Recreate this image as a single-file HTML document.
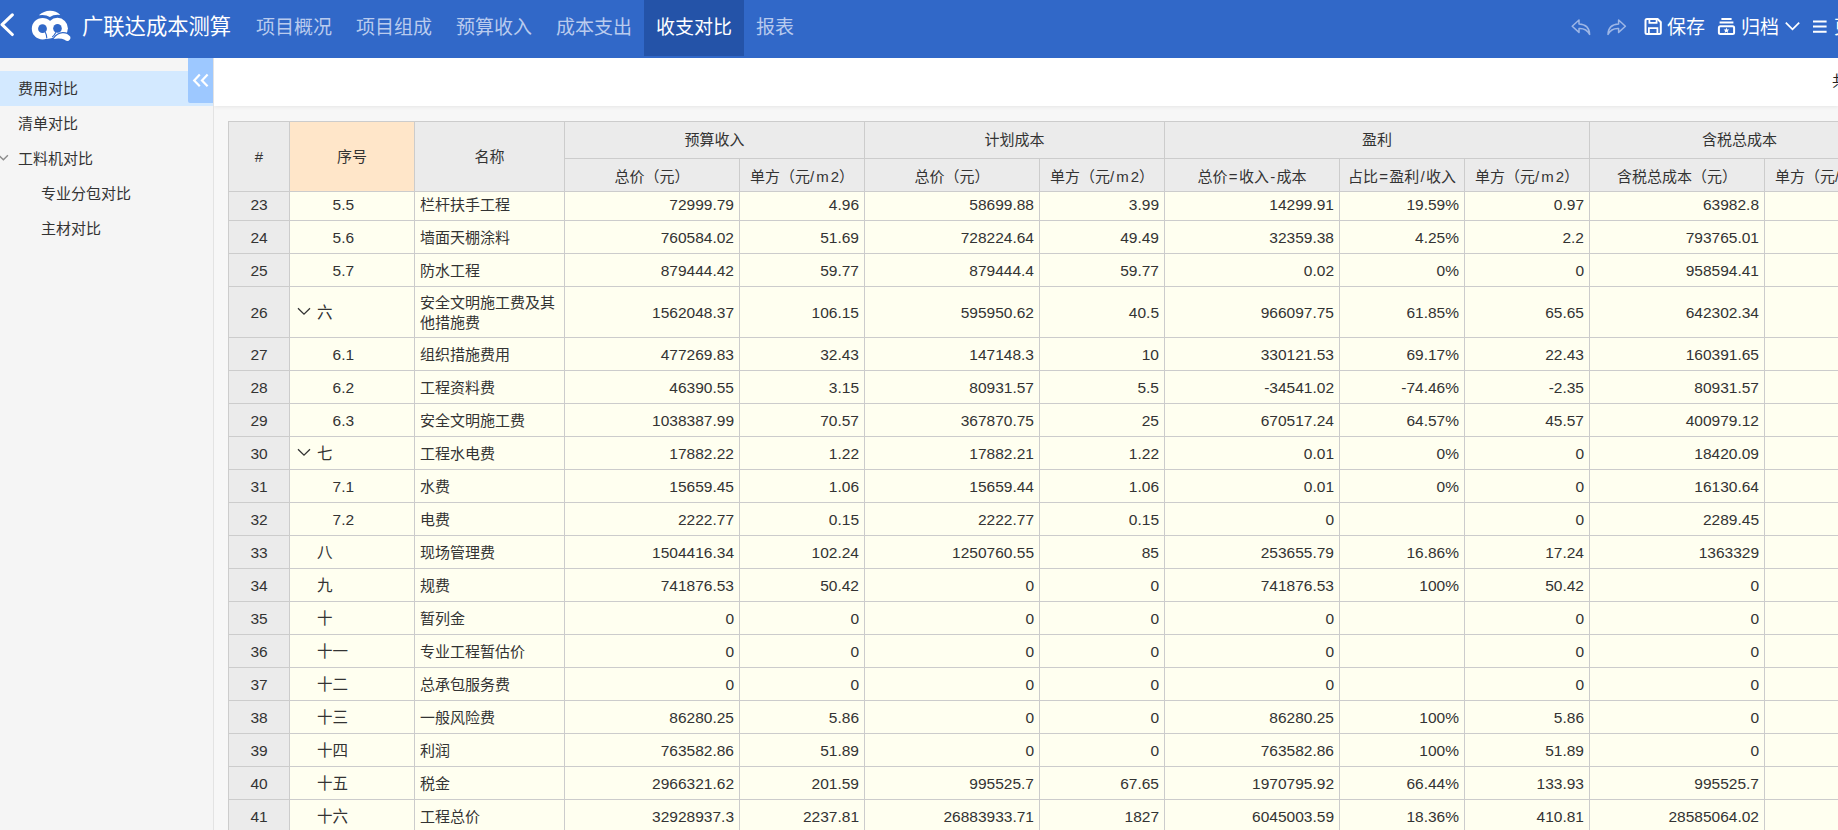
<!DOCTYPE html>
<html lang="zh-CN">
<head>
<meta charset="utf-8">
<title>广联达成本测算</title>
<style>
*{box-sizing:content-box;margin:0;padding:0}
html,body{width:1838px;height:830px;overflow:hidden;background:#f7f7f7}
body{position:relative;font-family:"Liberation Sans","Noto Sans CJK SC",sans-serif;color:#333;font-size:15px}
.abs{position:absolute}
#hd{position:absolute;left:0;top:0;width:1838px;height:58px;background:#3168c8;z-index:5;overflow:hidden}
#hd .title{position:absolute;left:82px;top:0;height:55px;line-height:55px;font-size:21.3px;color:#fff;white-space:nowrap}
#hd .tab{position:absolute;top:0;height:56px;line-height:55px;font-size:19px;color:#b9cbee;text-align:center;white-space:nowrap}
#hd .tab.on{background:#2453a8;color:#fff}
#hd .rt{position:absolute;top:0;height:56px;line-height:56px;font-size:19px;color:#fff;white-space:nowrap}
#sb{position:absolute;left:0;top:58px;width:213px;height:772px;background:#f5f5f5;border-right:1px solid #e3e3e3;z-index:3}
#sb .it{position:absolute;left:0;width:213px;height:35px;line-height:35px;font-size:15px;color:#333;white-space:nowrap}
#sb .it.on{background:#d3e9ff}
#sb .it span{position:absolute;left:18px}
#sb .it.l2 span{left:41px}
#tg{position:absolute;left:188px;top:58px;width:25px;height:45px;background:#9dc8ff;border-radius:0 0 0 2px;z-index:4}
#tb{position:absolute;left:214px;top:58px;width:1624px;height:48px;background:#fff;box-shadow:0 1px 4px rgba(0,0,0,.075);z-index:2;overflow:hidden}
#tb span{position:absolute;left:1618px;top:13px;line-height:20px;font-size:15px;color:#222;white-space:nowrap}
#grid{position:absolute;left:0;top:0;width:1838px;height:830px;overflow:hidden;z-index:1}
.vl{position:absolute;left:228px;top:121px;width:1px;height:709px;background:#ccc;z-index:4}
.hl{position:absolute;left:228px;top:121px;width:1610px;height:1px;background:#ccc;z-index:4}
.h{position:absolute;background:#ebebeb;border-right:1px solid #ccc;border-bottom:1px solid #ccc;text-align:center;font-size:15px;color:#333;white-space:nowrap;z-index:3}
.h i{font-style:normal;letter-spacing:2px;margin-right:-2px}
.h b{font-weight:normal;margin:0 1.25px}
.h.p{background:#ffe6c9}
.r{position:absolute;left:0;width:1838px}
.c{position:absolute;top:0;height:100%;border-right:1px solid #ccc;border-bottom:1px solid #ccc;background:#fffff0;line-height:34px;white-space:nowrap;overflow:hidden}
.t .c{line-height:52px}
.c.n{background:#ebebeb;text-align:center;font-size:15.5px}
.c.q{font-size:15.5px}
.c.q .s1{position:absolute;left:27px}
.c.q .s2{position:absolute;left:42.6px}
.c.q .ar{position:absolute;left:7px;top:50%;margin-top:-5px}
.c.m span{position:absolute;left:5px}
.t .c.m span{line-height:20px;top:6px}
.c.v{text-align:right;font-size:15.5px}
.c.v{padding-right:5px}
</style>
</head>
<body>
<div id="hd">
<svg class="abs" style="left:0;top:10px" width="18" height="30" viewBox="0 0 18 30"><path d="M12.3 4.9 L2.1 14.7 L12.3 24.5" fill="none" stroke="#fff" stroke-width="3.1" stroke-linecap="round" stroke-linejoin="round"/></svg>
<svg class="abs" style="left:28px;top:6px" width="46" height="40" viewBox="28 6 46 40">
<path d="M38.9 15.3 Q44 10.7 50 10.8 Q56 10.7 60.3 15 Q54 14.2 49.9 17 Q45.5 14.2 38.9 15.3Z" fill="#fff"/>
<circle cx="42.6" cy="28.7" r="10.8" fill="#fff"/>
<circle cx="57.4" cy="28.3" r="10.5" fill="#fff"/>
<path d="M45 33 L55 33 L53.2 37.8 L50 38.6 L46.6 38.9Z" fill="#fff"/>
<circle cx="42.5" cy="28.7" r="4.4" fill="#3168c8"/>
<circle cx="57.5" cy="28.4" r="4.3" fill="#3168c8"/>
<path d="M45.2 32 Q46.6 34.5 46.8 38.2" fill="none" stroke="#3168c8" stroke-width="1.1"/>
<path d="M55.9 32.2 Q54.6 35 52.2 37.2" fill="none" stroke="#3168c8" stroke-width="1.1"/>
<path d="M53.6 38.9 Q57.5 33.6 62.6 33.2 Q67.5 33 70.2 36.6 Q71.2 39.6 68.2 41 Q66.2 41.2 64.6 39.8 Q61 37.8 53.6 38.9Z" fill="#fff" stroke="#3168c8" stroke-width="2.2" paint-order="stroke"/>
</svg>
<div class="title">广联达成本测算</div>
<div class="tab" style="left:244px;width:100px">项目概况</div>
<div class="tab" style="left:344px;width:100px">项目组成</div>
<div class="tab" style="left:444px;width:100px">预算收入</div>
<div class="tab" style="left:544px;width:100px">成本支出</div>
<div class="tab on" style="left:644px;width:100px">收支对比</div>
<div class="tab" style="left:744px;width:62px">报表</div>
<svg class="abs" style="left:1569px;top:15.6px" width="24" height="22" viewBox="1569 15 24 22"><path d="M1579 19 L1572.2 25.2 L1579 31.4 L1579 27.4 Q1586.5 27 1589.6 33.4 Q1589.4 23.6 1579 23 Z" fill="none" stroke="#9db6e6" stroke-width="1.5" stroke-linejoin="round"/></svg>
<svg class="abs" style="left:1605px;top:15.6px" width="24" height="22" viewBox="1605 15 24 22"><path d="M1618.6 19 L1625.4 25.2 L1618.6 31.4 L1618.6 27.4 Q1611.1 27 1608 33.4 Q1608.2 23.6 1618.6 23 Z" fill="none" stroke="#9db6e6" stroke-width="1.5" stroke-linejoin="round"/></svg>
<svg class="abs" style="left:1643px;top:16px" width="21" height="21" viewBox="1643 16 21 21"><path d="M1647 19 L1657.6 19 L1660.8 22.2 L1660.8 32.4 Q1660.8 33.9 1659.3 33.9 L1647 33.9 Q1645.5 33.9 1645.5 32.4 L1645.5 20.5 Q1645.5 19 1647 19Z" fill="none" stroke="#fff" stroke-width="2"/><path d="M1649.4 19.6 L1649.4 22.9 L1656.6 22.9 L1656.6 19.6 M1648.9 33.6 L1648.9 28.2 L1657.4 28.2 L1657.4 33.6" fill="none" stroke="#fff" stroke-width="1.8"/></svg>
<div class="rt" style="left:1667px">保存</div>
<svg class="abs" style="left:1716px;top:16px" width="21" height="21" viewBox="1716 16 21 21"><path d="M1721.4 19 L1731.6 19 M1719.6 22.5 L1733.4 22.5" fill="none" stroke="#fff" stroke-width="1.8"/><rect x="1718.9" y="26.3" width="15.2" height="7.6" rx="1.5" fill="none" stroke="#fff" stroke-width="2"/><path d="M1726.4 27.6 L1727.2 29.5 L1729.2 29.6 L1727.7 30.9 L1728.2 32.9 L1726.4 31.8 L1724.6 32.9 L1725.1 30.9 L1723.6 29.6 L1725.6 29.5Z" fill="#fff"/></svg>
<div class="rt" style="left:1741px">归档</div>
<svg class="abs" style="left:1783px;top:19px" width="19" height="14" viewBox="1783 19 19 14"><path d="M1785.8 22.6 L1792.5 29.4 L1799.2 22.6" fill="none" stroke="#fff" stroke-width="1.7"/></svg>
<svg class="abs" style="left:1811px;top:18px" width="18" height="17" viewBox="1811 18 18 17"><path d="M1813 21.6 L1826.6 21.6 M1813 26.6 L1826.6 26.6 M1813 31.7 L1826.6 31.7" fill="none" stroke="#fff" stroke-width="2"/></svg>
<div class="rt" style="left:1834px">更多</div>
</div>

<div id="sb">
<div class="it on" style="top:13px"><span>费用对比</span></div>
<div class="it" style="top:48px"><span>清单对比</span></div>
<div class="it" style="top:83px"><span>工料机对比</span><svg class="abs" style="left:0;top:12px" width="10" height="10" viewBox="0 0 10 10"><path d="M-1 2.4 L3.4 6.8 L7.9 2.3" fill="none" stroke="#8c8c8c" stroke-width="1.4"/></svg></div>
<div class="it l2" style="top:118px"><span>专业分包对比</span></div>
<div class="it l2" style="top:153px"><span>主材对比</span></div>
</div>
<div id="tg"><svg class="abs" style="left:4px;top:14px" width="18" height="17" viewBox="0 0 18 17"><path d="M7.8 2.6 L2.2 8.4 L7.8 14.2 M15.6 2.6 L10 8.4 L15.6 14.2" fill="none" stroke="#fff" stroke-width="2.2"/></svg></div>
<div id="tb"><span>共</span></div>

<div id="grid">
<div class="vl"></div><div class="hl"></div>
<div class="h" style="left:229px;top:122px;width:60px;height:69px;line-height:69px">#</div>
<div class="h p" style="left:290px;top:122px;width:124px;height:69px;line-height:69px">序号</div>
<div class="h" style="left:415px;top:122px;width:149px;height:69px;line-height:69px">名称</div>
<div class="h" style="left:565px;top:122px;width:299px;height:36px;line-height:36px">预算收入</div>
<div class="h" style="left:865px;top:122px;width:299px;height:36px;line-height:36px">计划成本</div>
<div class="h" style="left:1165px;top:122px;width:424px;height:36px;line-height:36px">盈利</div>
<div class="h" style="left:1590px;top:122px;width:299px;height:36px;line-height:36px">含税总成本</div>
<div class="h" style="left:565px;top:159px;width:174px;height:32px;line-height:35px">总价（元）</div>
<div class="h" style="left:740px;top:159px;width:124px;height:32px;line-height:35px">单方（元<i>/m2</i>）</div>
<div class="h" style="left:865px;top:159px;width:174px;height:32px;line-height:35px">总价（元）</div>
<div class="h" style="left:1040px;top:159px;width:124px;height:32px;line-height:35px">单方（元<i>/m2</i>）</div>
<div class="h" style="left:1165px;top:159px;width:174px;height:32px;line-height:35px">总价<b>=</b>收入<b>-</b>成本</div>
<div class="h" style="left:1340px;top:159px;width:124px;height:32px;line-height:35px">占比<b>=</b>盈利<b>/</b>收入</div>
<div class="h" style="left:1465px;top:159px;width:124px;height:32px;line-height:35px">单方（元<i>/m2</i>）</div>
<div class="h" style="left:1590px;top:159px;width:174px;height:32px;line-height:35px">含税总成本（元）</div>
<div class="h" style="left:1765px;top:159px;width:124px;height:32px;line-height:35px">单方（元<i>/m2</i>）</div>
<div class="r f" style="top:188px;height:32px">
<div class="c n" style="left:229px;width:60px">23</div>
<div class="c q" style="left:290px;width:124px"><span class="s2">5.5</span></div>
<div class="c m" style="left:415px;width:149px"><span>栏杆扶手工程</span></div>
<div class="c v" style="left:565px;width:169px">72999.79</div>
<div class="c v" style="left:740px;width:119px">4.96</div>
<div class="c v" style="left:865px;width:169px">58699.88</div>
<div class="c v" style="left:1040px;width:119px">3.99</div>
<div class="c v" style="left:1165px;width:169px">14299.91</div>
<div class="c v" style="left:1340px;width:119px">19.59%</div>
<div class="c v" style="left:1465px;width:119px">0.97</div>
<div class="c v" style="left:1590px;width:169px">63982.8</div>
<div class="c v" style="left:1765px;width:119px"></div>
</div>
<div class="r" style="top:221px;height:32px">
<div class="c n" style="left:229px;width:60px">24</div>
<div class="c q" style="left:290px;width:124px"><span class="s2">5.6</span></div>
<div class="c m" style="left:415px;width:149px"><span>墙面天棚涂料</span></div>
<div class="c v" style="left:565px;width:169px">760584.02</div>
<div class="c v" style="left:740px;width:119px">51.69</div>
<div class="c v" style="left:865px;width:169px">728224.64</div>
<div class="c v" style="left:1040px;width:119px">49.49</div>
<div class="c v" style="left:1165px;width:169px">32359.38</div>
<div class="c v" style="left:1340px;width:119px">4.25%</div>
<div class="c v" style="left:1465px;width:119px">2.2</div>
<div class="c v" style="left:1590px;width:169px">793765.01</div>
<div class="c v" style="left:1765px;width:119px"></div>
</div>
<div class="r" style="top:254px;height:32px">
<div class="c n" style="left:229px;width:60px">25</div>
<div class="c q" style="left:290px;width:124px"><span class="s2">5.7</span></div>
<div class="c m" style="left:415px;width:149px"><span>防水工程</span></div>
<div class="c v" style="left:565px;width:169px">879444.42</div>
<div class="c v" style="left:740px;width:119px">59.77</div>
<div class="c v" style="left:865px;width:169px">879444.4</div>
<div class="c v" style="left:1040px;width:119px">59.77</div>
<div class="c v" style="left:1165px;width:169px">0.02</div>
<div class="c v" style="left:1340px;width:119px">0%</div>
<div class="c v" style="left:1465px;width:119px">0</div>
<div class="c v" style="left:1590px;width:169px">958594.41</div>
<div class="c v" style="left:1765px;width:119px"></div>
</div>
<div class="r t" style="top:287px;height:50px">
<div class="c n" style="left:229px;width:60px">26</div>
<div class="c q" style="left:290px;width:124px"><svg class="ar" width="14" height="9" viewBox="0 0 14 9"><path d="M1 1.2 L7 7.2 L13 1.2" fill="none" stroke="#333" stroke-width="1.3"/></svg><span class="s1">六</span></div>
<div class="c m" style="left:415px;width:149px"><span>安全文明施工费及其<br>他措施费</span></div>
<div class="c v" style="left:565px;width:169px">1562048.37</div>
<div class="c v" style="left:740px;width:119px">106.15</div>
<div class="c v" style="left:865px;width:169px">595950.62</div>
<div class="c v" style="left:1040px;width:119px">40.5</div>
<div class="c v" style="left:1165px;width:169px">966097.75</div>
<div class="c v" style="left:1340px;width:119px">61.85%</div>
<div class="c v" style="left:1465px;width:119px">65.65</div>
<div class="c v" style="left:1590px;width:169px">642302.34</div>
<div class="c v" style="left:1765px;width:119px"></div>
</div>
<div class="r" style="top:338px;height:32px">
<div class="c n" style="left:229px;width:60px">27</div>
<div class="c q" style="left:290px;width:124px"><span class="s2">6.1</span></div>
<div class="c m" style="left:415px;width:149px"><span>组织措施费用</span></div>
<div class="c v" style="left:565px;width:169px">477269.83</div>
<div class="c v" style="left:740px;width:119px">32.43</div>
<div class="c v" style="left:865px;width:169px">147148.3</div>
<div class="c v" style="left:1040px;width:119px">10</div>
<div class="c v" style="left:1165px;width:169px">330121.53</div>
<div class="c v" style="left:1340px;width:119px">69.17%</div>
<div class="c v" style="left:1465px;width:119px">22.43</div>
<div class="c v" style="left:1590px;width:169px">160391.65</div>
<div class="c v" style="left:1765px;width:119px"></div>
</div>
<div class="r" style="top:371px;height:32px">
<div class="c n" style="left:229px;width:60px">28</div>
<div class="c q" style="left:290px;width:124px"><span class="s2">6.2</span></div>
<div class="c m" style="left:415px;width:149px"><span>工程资料费</span></div>
<div class="c v" style="left:565px;width:169px">46390.55</div>
<div class="c v" style="left:740px;width:119px">3.15</div>
<div class="c v" style="left:865px;width:169px">80931.57</div>
<div class="c v" style="left:1040px;width:119px">5.5</div>
<div class="c v" style="left:1165px;width:169px">-34541.02</div>
<div class="c v" style="left:1340px;width:119px">-74.46%</div>
<div class="c v" style="left:1465px;width:119px">-2.35</div>
<div class="c v" style="left:1590px;width:169px">80931.57</div>
<div class="c v" style="left:1765px;width:119px"></div>
</div>
<div class="r" style="top:404px;height:32px">
<div class="c n" style="left:229px;width:60px">29</div>
<div class="c q" style="left:290px;width:124px"><span class="s2">6.3</span></div>
<div class="c m" style="left:415px;width:149px"><span>安全文明施工费</span></div>
<div class="c v" style="left:565px;width:169px">1038387.99</div>
<div class="c v" style="left:740px;width:119px">70.57</div>
<div class="c v" style="left:865px;width:169px">367870.75</div>
<div class="c v" style="left:1040px;width:119px">25</div>
<div class="c v" style="left:1165px;width:169px">670517.24</div>
<div class="c v" style="left:1340px;width:119px">64.57%</div>
<div class="c v" style="left:1465px;width:119px">45.57</div>
<div class="c v" style="left:1590px;width:169px">400979.12</div>
<div class="c v" style="left:1765px;width:119px"></div>
</div>
<div class="r" style="top:437px;height:32px">
<div class="c n" style="left:229px;width:60px">30</div>
<div class="c q" style="left:290px;width:124px"><svg class="ar" width="14" height="9" viewBox="0 0 14 9"><path d="M1 1.2 L7 7.2 L13 1.2" fill="none" stroke="#333" stroke-width="1.3"/></svg><span class="s1">七</span></div>
<div class="c m" style="left:415px;width:149px"><span>工程水电费</span></div>
<div class="c v" style="left:565px;width:169px">17882.22</div>
<div class="c v" style="left:740px;width:119px">1.22</div>
<div class="c v" style="left:865px;width:169px">17882.21</div>
<div class="c v" style="left:1040px;width:119px">1.22</div>
<div class="c v" style="left:1165px;width:169px">0.01</div>
<div class="c v" style="left:1340px;width:119px">0%</div>
<div class="c v" style="left:1465px;width:119px">0</div>
<div class="c v" style="left:1590px;width:169px">18420.09</div>
<div class="c v" style="left:1765px;width:119px"></div>
</div>
<div class="r" style="top:470px;height:32px">
<div class="c n" style="left:229px;width:60px">31</div>
<div class="c q" style="left:290px;width:124px"><span class="s2">7.1</span></div>
<div class="c m" style="left:415px;width:149px"><span>水费</span></div>
<div class="c v" style="left:565px;width:169px">15659.45</div>
<div class="c v" style="left:740px;width:119px">1.06</div>
<div class="c v" style="left:865px;width:169px">15659.44</div>
<div class="c v" style="left:1040px;width:119px">1.06</div>
<div class="c v" style="left:1165px;width:169px">0.01</div>
<div class="c v" style="left:1340px;width:119px">0%</div>
<div class="c v" style="left:1465px;width:119px">0</div>
<div class="c v" style="left:1590px;width:169px">16130.64</div>
<div class="c v" style="left:1765px;width:119px"></div>
</div>
<div class="r" style="top:503px;height:32px">
<div class="c n" style="left:229px;width:60px">32</div>
<div class="c q" style="left:290px;width:124px"><span class="s2">7.2</span></div>
<div class="c m" style="left:415px;width:149px"><span>电费</span></div>
<div class="c v" style="left:565px;width:169px">2222.77</div>
<div class="c v" style="left:740px;width:119px">0.15</div>
<div class="c v" style="left:865px;width:169px">2222.77</div>
<div class="c v" style="left:1040px;width:119px">0.15</div>
<div class="c v" style="left:1165px;width:169px">0</div>
<div class="c v" style="left:1340px;width:119px"></div>
<div class="c v" style="left:1465px;width:119px">0</div>
<div class="c v" style="left:1590px;width:169px">2289.45</div>
<div class="c v" style="left:1765px;width:119px"></div>
</div>
<div class="r" style="top:536px;height:32px">
<div class="c n" style="left:229px;width:60px">33</div>
<div class="c q" style="left:290px;width:124px"><span class="s1">八</span></div>
<div class="c m" style="left:415px;width:149px"><span>现场管理费</span></div>
<div class="c v" style="left:565px;width:169px">1504416.34</div>
<div class="c v" style="left:740px;width:119px">102.24</div>
<div class="c v" style="left:865px;width:169px">1250760.55</div>
<div class="c v" style="left:1040px;width:119px">85</div>
<div class="c v" style="left:1165px;width:169px">253655.79</div>
<div class="c v" style="left:1340px;width:119px">16.86%</div>
<div class="c v" style="left:1465px;width:119px">17.24</div>
<div class="c v" style="left:1590px;width:169px">1363329</div>
<div class="c v" style="left:1765px;width:119px"></div>
</div>
<div class="r" style="top:569px;height:32px">
<div class="c n" style="left:229px;width:60px">34</div>
<div class="c q" style="left:290px;width:124px"><span class="s1">九</span></div>
<div class="c m" style="left:415px;width:149px"><span>规费</span></div>
<div class="c v" style="left:565px;width:169px">741876.53</div>
<div class="c v" style="left:740px;width:119px">50.42</div>
<div class="c v" style="left:865px;width:169px">0</div>
<div class="c v" style="left:1040px;width:119px">0</div>
<div class="c v" style="left:1165px;width:169px">741876.53</div>
<div class="c v" style="left:1340px;width:119px">100%</div>
<div class="c v" style="left:1465px;width:119px">50.42</div>
<div class="c v" style="left:1590px;width:169px">0</div>
<div class="c v" style="left:1765px;width:119px"></div>
</div>
<div class="r" style="top:602px;height:32px">
<div class="c n" style="left:229px;width:60px">35</div>
<div class="c q" style="left:290px;width:124px"><span class="s1">十</span></div>
<div class="c m" style="left:415px;width:149px"><span>暂列金</span></div>
<div class="c v" style="left:565px;width:169px">0</div>
<div class="c v" style="left:740px;width:119px">0</div>
<div class="c v" style="left:865px;width:169px">0</div>
<div class="c v" style="left:1040px;width:119px">0</div>
<div class="c v" style="left:1165px;width:169px">0</div>
<div class="c v" style="left:1340px;width:119px"></div>
<div class="c v" style="left:1465px;width:119px">0</div>
<div class="c v" style="left:1590px;width:169px">0</div>
<div class="c v" style="left:1765px;width:119px"></div>
</div>
<div class="r" style="top:635px;height:32px">
<div class="c n" style="left:229px;width:60px">36</div>
<div class="c q" style="left:290px;width:124px"><span class="s1">十一</span></div>
<div class="c m" style="left:415px;width:149px"><span>专业工程暂估价</span></div>
<div class="c v" style="left:565px;width:169px">0</div>
<div class="c v" style="left:740px;width:119px">0</div>
<div class="c v" style="left:865px;width:169px">0</div>
<div class="c v" style="left:1040px;width:119px">0</div>
<div class="c v" style="left:1165px;width:169px">0</div>
<div class="c v" style="left:1340px;width:119px"></div>
<div class="c v" style="left:1465px;width:119px">0</div>
<div class="c v" style="left:1590px;width:169px">0</div>
<div class="c v" style="left:1765px;width:119px"></div>
</div>
<div class="r" style="top:668px;height:32px">
<div class="c n" style="left:229px;width:60px">37</div>
<div class="c q" style="left:290px;width:124px"><span class="s1">十二</span></div>
<div class="c m" style="left:415px;width:149px"><span>总承包服务费</span></div>
<div class="c v" style="left:565px;width:169px">0</div>
<div class="c v" style="left:740px;width:119px">0</div>
<div class="c v" style="left:865px;width:169px">0</div>
<div class="c v" style="left:1040px;width:119px">0</div>
<div class="c v" style="left:1165px;width:169px">0</div>
<div class="c v" style="left:1340px;width:119px"></div>
<div class="c v" style="left:1465px;width:119px">0</div>
<div class="c v" style="left:1590px;width:169px">0</div>
<div class="c v" style="left:1765px;width:119px"></div>
</div>
<div class="r" style="top:701px;height:32px">
<div class="c n" style="left:229px;width:60px">38</div>
<div class="c q" style="left:290px;width:124px"><span class="s1">十三</span></div>
<div class="c m" style="left:415px;width:149px"><span>一般风险费</span></div>
<div class="c v" style="left:565px;width:169px">86280.25</div>
<div class="c v" style="left:740px;width:119px">5.86</div>
<div class="c v" style="left:865px;width:169px">0</div>
<div class="c v" style="left:1040px;width:119px">0</div>
<div class="c v" style="left:1165px;width:169px">86280.25</div>
<div class="c v" style="left:1340px;width:119px">100%</div>
<div class="c v" style="left:1465px;width:119px">5.86</div>
<div class="c v" style="left:1590px;width:169px">0</div>
<div class="c v" style="left:1765px;width:119px"></div>
</div>
<div class="r" style="top:734px;height:32px">
<div class="c n" style="left:229px;width:60px">39</div>
<div class="c q" style="left:290px;width:124px"><span class="s1">十四</span></div>
<div class="c m" style="left:415px;width:149px"><span>利润</span></div>
<div class="c v" style="left:565px;width:169px">763582.86</div>
<div class="c v" style="left:740px;width:119px">51.89</div>
<div class="c v" style="left:865px;width:169px">0</div>
<div class="c v" style="left:1040px;width:119px">0</div>
<div class="c v" style="left:1165px;width:169px">763582.86</div>
<div class="c v" style="left:1340px;width:119px">100%</div>
<div class="c v" style="left:1465px;width:119px">51.89</div>
<div class="c v" style="left:1590px;width:169px">0</div>
<div class="c v" style="left:1765px;width:119px"></div>
</div>
<div class="r" style="top:767px;height:32px">
<div class="c n" style="left:229px;width:60px">40</div>
<div class="c q" style="left:290px;width:124px"><span class="s1">十五</span></div>
<div class="c m" style="left:415px;width:149px"><span>税金</span></div>
<div class="c v" style="left:565px;width:169px">2966321.62</div>
<div class="c v" style="left:740px;width:119px">201.59</div>
<div class="c v" style="left:865px;width:169px">995525.7</div>
<div class="c v" style="left:1040px;width:119px">67.65</div>
<div class="c v" style="left:1165px;width:169px">1970795.92</div>
<div class="c v" style="left:1340px;width:119px">66.44%</div>
<div class="c v" style="left:1465px;width:119px">133.93</div>
<div class="c v" style="left:1590px;width:169px">995525.7</div>
<div class="c v" style="left:1765px;width:119px"></div>
</div>
<div class="r" style="top:800px;height:32px">
<div class="c n" style="left:229px;width:60px">41</div>
<div class="c q" style="left:290px;width:124px"><span class="s1">十六</span></div>
<div class="c m" style="left:415px;width:149px"><span>工程总价</span></div>
<div class="c v" style="left:565px;width:169px">32928937.3</div>
<div class="c v" style="left:740px;width:119px">2237.81</div>
<div class="c v" style="left:865px;width:169px">26883933.71</div>
<div class="c v" style="left:1040px;width:119px">1827</div>
<div class="c v" style="left:1165px;width:169px">6045003.59</div>
<div class="c v" style="left:1340px;width:119px">18.36%</div>
<div class="c v" style="left:1465px;width:119px">410.81</div>
<div class="c v" style="left:1590px;width:169px">28585064.02</div>
<div class="c v" style="left:1765px;width:119px"></div>
</div>
</div>
</body>
</html>
